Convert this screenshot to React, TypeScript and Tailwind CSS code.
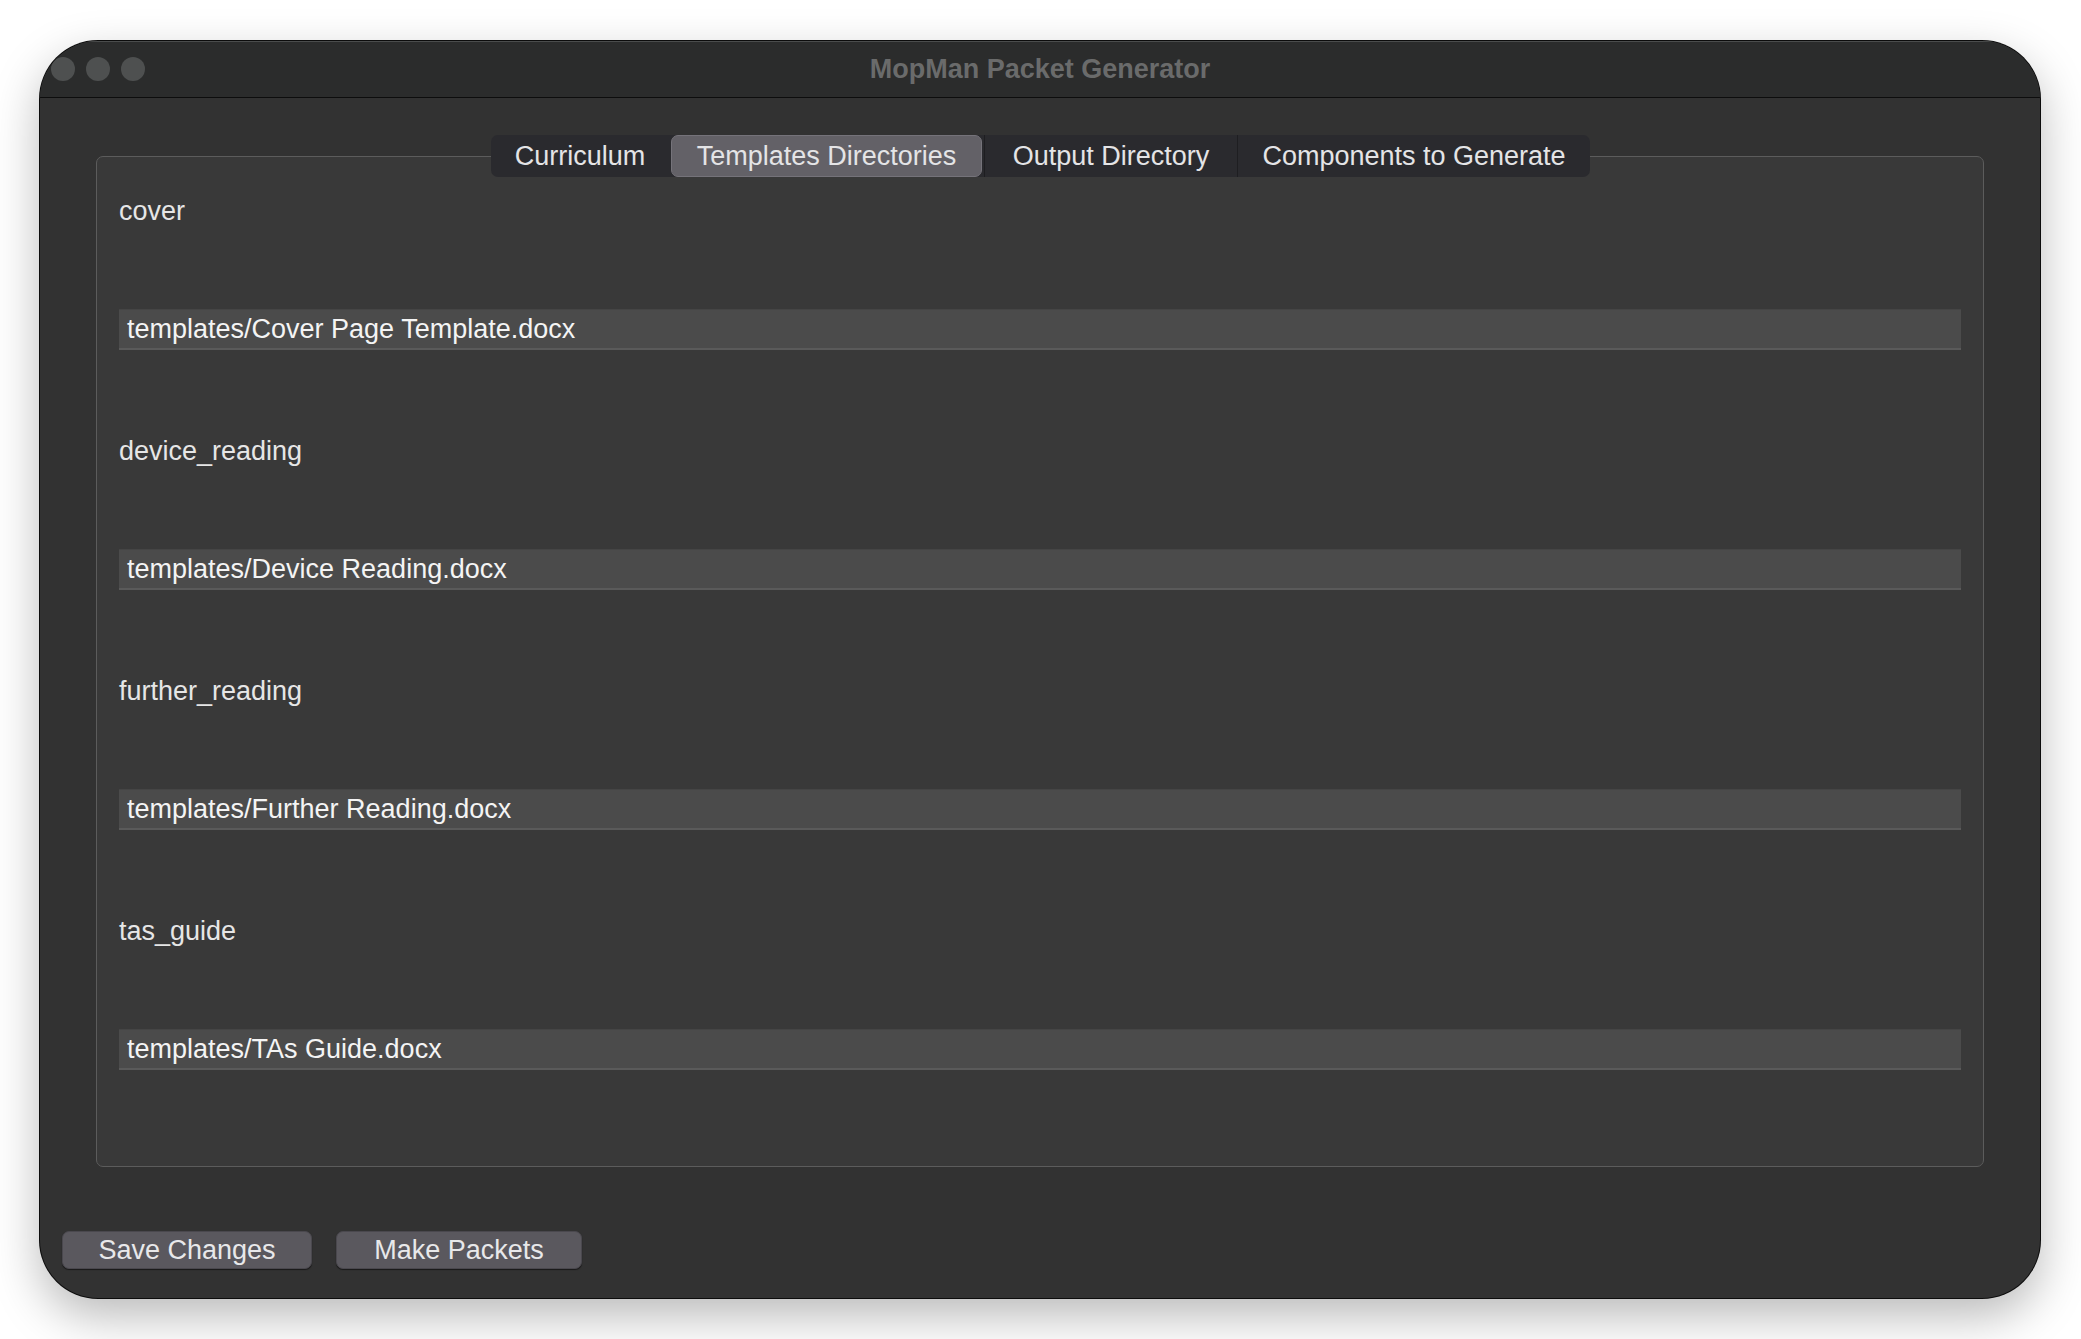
import React from 'react'

const font = { fontFamily: '"Liberation Sans", Arial, sans-serif' }

const tabs = [
  { label: 'Curriculum', w: 'w-[178px]' },
  { label: 'Templates Directories', w: 'w-[311px]' },
  { label: 'Output Directory', w: 'w-[252px]' },
  { label: 'Components to Generate', w: 'w-[352px]' },
]

const templates = [
  { key: 'cover', path: 'templates/Cover Page Template.docx' },
  { key: 'device_reading', path: 'templates/Device Reading.docx' },
  { key: 'further_reading', path: 'templates/Further Reading.docx' },
  { key: 'tas_guide', path: 'templates/TAs Guide.docx' },
]

function TrafficLights() {
  return (
    <div className="flex items-center gap-[11px] pl-[11px]">
      <span className="h-[24px] w-[24px] rounded-full bg-[#4e5050]" />
      <span className="h-[24px] w-[24px] rounded-full bg-[#4e5050]" />
      <span className="h-[24px] w-[24px] rounded-full bg-[#4e5050]" />
    </div>
  )
}

function TabBar() {
  return (
    <div className="absolute left-[394px] top-[-22px] flex h-[42px] items-stretch rounded-[7px] bg-[#2a2a2e]">
      {tabs.map((t, i) => {
        const selected = i === 1
        return (
          <div key={t.label} className="flex items-stretch">
            {i > 1 && <span className="w-px bg-[#1e1e21]" />}
            <div
              className={`${t.w} flex items-center justify-center text-[27px] leading-none text-[#e4e4e6] ${
                selected ? 'mx-[2px] rounded-[7px] border border-[#75737a] bg-[#636167]' : ''
              }`}
            >
              {t.label}
            </div>
          </div>
        )
      })}
    </div>
  )
}

function TemplateRow({ name, path }: { name: string; path: string }) {
  return (
    <div className="flex flex-col">
      <div className="h-[32px] text-[27px] leading-[32px] text-[#e6e6e6]">{name}</div>
      <div className="mt-[82px] flex h-[41px] items-center border-t border-t-[#454545] border-b-2 border-b-[#5a5a5a] bg-[#4b4b4b] pl-[8px] text-[27px] leading-none text-[#f4f4f4]">
        {path}
      </div>
    </div>
  )
}

export default function App() {
  return (
    <div className="min-h-screen bg-white pl-[40px] pt-[41px]" style={font}>
      <div className="flex h-[1257px] w-[2000px] flex-col overflow-hidden rounded-[58px] bg-[#323232] shadow-[0_0_0_1px_#0c0c0c,0_18px_48px_rgba(0,0,0,0.28)]">
        {/* title bar */}
        <div className="relative flex h-[57px] shrink-0 items-center border-b border-b-[#0d0d0d] bg-[#2b2c2c] shadow-[inset_0_1px_0_#4a4c4c]">
          <TrafficLights />
          <div className="absolute inset-0 flex items-center justify-center text-[27px] font-bold text-[#6a6b6b]">
            MopMan Packet Generator
          </div>
        </div>

        {/* tab widget */}
        <div className="relative mx-[56px] mt-[58px] h-[1011px] rounded-[7px] border border-[#5c5c5c] bg-[#393939]">
          <TabBar />
          <div className="flex flex-col gap-[85px] px-[22px] pt-[38px]">
            {templates.map((t) => (
              <TemplateRow key={t.key} name={t.key} path={t.path} />
            ))}
          </div>
        </div>

        {/* actions */}
        <div className="ml-[22px] mt-[64px] flex gap-[24px]">
          <button className="h-[38px] w-[250px] rounded-[7px] border border-[#4a484e] bg-[#5a585e] text-[27px] leading-none text-[#e8e8ea] shadow-[0_1px_1px_rgba(0,0,0,0.5)]">
            Save Changes
          </button>
          <button className="h-[38px] w-[246px] rounded-[7px] border border-[#4a484e] bg-[#5a585e] text-[27px] leading-none text-[#e8e8ea] shadow-[0_1px_1px_rgba(0,0,0,0.5)]">
            Make Packets
          </button>
        </div>
      </div>
    </div>
  )
}
